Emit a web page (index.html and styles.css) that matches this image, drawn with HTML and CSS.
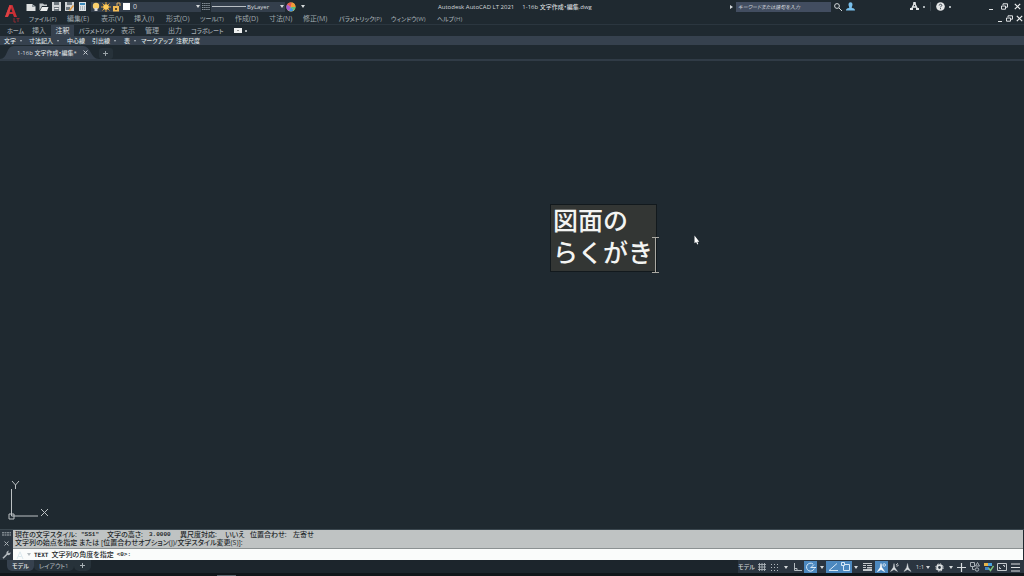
FILE: index.html
```html
<!DOCTYPE html>
<html lang="ja">
<head>
<meta charset="utf-8">
<title>Autodesk AutoCAD LT 2021</title>
<link rel="stylesheet" href="styles.css">
</head>
<body>
<div class="app">
  <header class="header">
    <button class="logo" aria-label="アプリケーション メニュー">
      <svg width="18" height="20" viewBox="0 0 18 20"><path d="M1 14 5.500 2h3l4.500 12h-3l-1.200-3H5.500L4 14z" fill="#c92f35"/><path d="m7 5 1.400 4H5.600z" fill="#1f2930"/><path d="m5.500 2 2 1-3.700 11H1z" fill="#dd4144"/><path d="M10 15v4h2M12.500 15.500h3M14 15.500V19" stroke="#8f2a30" fill="none"/></svg>
    </button>
    <div class="titlebar">
      <div class="quick">
        <button class="ic w13" aria-label="新規"><svg width="10" height="8" viewBox="0 0 10 8"><path d="M.5 1H6l3.500 2.500V8h-9z" fill="#dfe2e2"/><path d="M6 1v3h3.500" fill="#8d969b"/></svg></button>
        <button class="ic w13" aria-label="開く"><svg width="10" height="8" viewBox="0 0 10 8"><path d="M.5 7.500V.5H4l1 1h3V3H3z" fill="#c3c8ca"/><path d="M3 4h6.500L8 8H1z" fill="#eceeee"/></svg></button>
        <button class="ic w13" aria-label="上書き保存"><svg width="9" height="9" viewBox="0 0 9 9"><path d="M0 0h9v9H0z" fill="#cfd3d5"/><path d="M2 0h5v3H2zM2 5h5v4H2z" fill="#6d777e"/><path d="M2.500 6h4v1h-4z" fill="#eee"/></svg></button>
        <button class="ic w13" aria-label="名前を付けて保存"><svg width="9" height="9" viewBox="0 0 9 9"><path d="M0 0h9v9H0z" fill="#cfd3d5"/><path d="M2 0h5v3H2zM1 5h4v3H1z" fill="#6d777e"/><path d="m4 8 4-5 1 1-4 5z" fill="#e79a38"/></svg></button>
        <button class="ic w13" aria-label="印刷"><svg width="7" height="9" viewBox="0 0 7 9"><path d="M0 0h7v9H0z" fill="#dce2e5"/><path d="M1 1h5v2H1z" fill="#3a88b8"/><path d="M1 5h5M1 7h5" stroke="#7b8790" stroke-dasharray="1 1"/></svg></button>
        <div class="field layer">
          <svg width="8" height="10" viewBox="0 0 8 10"><circle cx="4" cy="4" r="3.200" fill="#f8cf6c"/><path d="M2.500 6h3v3h-3z" fill="#d9dadb"/></svg>
          <svg width="10" height="10" viewBox="0 0 10 10"><path d="M5 0v10M0 5h10M1.500 1.500l7 7M8.500 1.500l-7 7" stroke="#e5a43b"/><circle cx="5" cy="5" r="2.800" fill="#ffcb58"/></svg>
          <svg width="9" height="10" viewBox="0 0 9 10"><path d="M1 4h6v5.500H1z" fill="#f1bb54"/><path d="M5 4V1h3v3" fill="none" stroke="#dfb266"/><path d="M3 6h2v2H3z" fill="#5b4a2a"/></svg>
          <svg width="8" height="7" viewBox="0 0 8 7"><path d="M1 0h7v7H1z" fill="#fff"/></svg>
          <span class="grow">0</span><i class="arr"></i>
        </div>
        <svg class="match" width="8" height="7" viewBox="0 0 8 7"><path d="M0 .5h8M0 2.500h8M0 4.500h8M0 6.500h8" stroke="#87919a" stroke-dasharray="1.500 .6"/></svg>
        <div class="field ltype"><span class="line"></span><span class="grow">ByLayer</span><i class="arr"></i></div>
        <button class="ic wheel" aria-label="色"><svg width="10" height="10" viewBox="0 0 10 10"><circle cx="5" cy="5" r="4.500" fill="#e8d14a"/><path d="M5 5 1 2.500A4.500 4.500 0 0 1 6 .6z" fill="#e9574e"/><path d="M5 5 1 2.500A4.500 4.500 0 0 0 3 9z" fill="#a35bd0"/><path d="M5 5 3 9a4.500 4.500 0 0 0 5-1z" fill="#3d92e0"/><path d="m5 5 3 3a4.500 4.500 0 0 0 1.400-3z" fill="#53c27d"/><path d="M5 5 6 .6A4.500 4.500 0 0 1 9.400 5z" fill="#f19a37"/></svg></button>
        <button class="ic w11" aria-label="カスタマイズ"><i class="arr"></i></button>
      </div>
      <div class="title">Autodesk AutoCAD LT 2021<span>1-16b 文字作成・編集.dwg</span></div>
      <div class="right">
        <i class="play"></i>
        <input class="search" type="text" aria-label="検索" placeholder="キーワードまたは語句を入力">
        <button class="ic w13" aria-label="検索実行"><svg width="8" height="8" viewBox="0 0 8 8"><circle cx="3" cy="3" r="2.400" fill="none" stroke="#d5d9db"/><path d="m5 5 3 3" stroke="#d5d9db"/></svg></button>
        <button class="ic w13" aria-label="サインイン"><svg width="9" height="9" viewBox="0 0 9 9"><path d="M2.500 2.200a2 2 0 0 1 4 0c0 2-.8 2.500-.8 3.300C6 6.300 9 6 9 8.500H0C0 6 3 6.300 3.300 5.500c0-.8-.8-1.300-.8-3.300z" fill="#79c0ec"/></svg></button>
        <button class="ic store" aria-label="アプリ ストア"><svg width="9" height="9" viewBox="0 0 9 9"><path d="m4.500 1-3 6M4.500 1l3 6M3 5h3" stroke="#e4e7e8" stroke-width="1.300" fill="none"/><path d="M0 6h3v2H0zM6 6h3v2H6zM3.300 0h2.400v2.500H3.300z" fill="#e4e7e8"/></svg><i class="dot"></i></button>
        <button class="ic help" aria-label="ヘルプ"><svg width="9" height="9" viewBox="0 0 9 9"><circle cx="4.500" cy="4.500" r="4.300" fill="#e4e7e8"/><path d="M3.200 3.500c0-1.800 2.800-1.600 2.600 0C5.700 4.300 4.500 4.300 4.500 5.300M4.500 6.200v1" stroke="#36414b" fill="none"/></svg><i class="dot"></i></button>
        <button class="ic w13" aria-label="最小化"><svg width="7" height="7" viewBox="0 0 7 7"><path d="M1 6.500h4" stroke="#e0e3e4"/></svg></button>
        <button class="ic w13" aria-label="元に戻す"><svg width="7" height="7" viewBox="0 0 7 7"><path d="M2 2V.8h4.500v3.400H5M.5 3h4v3.200h-4z" stroke="#e0e3e4" fill="none"/></svg></button>
        <button class="ic w13" aria-label="閉じる"><svg width="7" height="7" viewBox="0 0 7 7"><path d="m.8.8 5.400 5.400M6.200.8.800 6.200" stroke="#f0f2f2" stroke-width="1.200"/></svg></button>
      </div>
    </div>
    <nav class="menubar">
      <button class="kana">ファイル(F)</button><button>編集(E)</button><button>表示(V)</button><button>挿入(I)</button><button>形式(O)</button><button class="kana">ツール(T)</button><button>作成(D)</button><button>寸法(N)</button><button>修正(M)</button><button class="kana">パラメトリック(P)</button><button class="kana">ウィンドウ(W)</button><button class="kana">ヘルプ(H)</button>
      <div class="docwin">
        <button class="ic" aria-label="図面を最小化"><svg width="6" height="7" viewBox="0 0 6 7"><path d="M1 6.500h4" stroke="#e0e3e4"/></svg></button>
        <button class="ic" aria-label="図面を元に戻す"><svg width="7" height="7" viewBox="0 0 7 7"><path d="M2 2V.8h4.500v3.400H5M.5 3h4v3.200h-4z" stroke="#e0e3e4" fill="none"/></svg></button>
        <button class="ic" aria-label="図面を閉じる"><svg width="7" height="7" viewBox="0 0 7 7"><path d="m.8.8 5.400 5.400M6.200.8.800 6.200" stroke="#f0f2f2" stroke-width="1.200"/></svg></button>
      </div>
    </nav>
  </header>
  <nav class="ribbon">
    <button class="kana">ホーム</button><button>挿入</button><button class="on">注釈</button><button class="kana">パラメトリック</button><button>表示</button><button>管理</button><button>出力</button><button class="kana">コラボレート</button>
    <button class="ic mini" aria-label="リボンを最小化"><svg width="8" height="5" viewBox="0 0 8 5"><path d="M0 0h8v5H0z" fill="#eef0f0"/><path d="m3 3 1-1 1 1z" fill="#333"/></svg><i class="dot"></i></button>
  </nav>
  <div class="panels">
    <button>文字<i></i></button><button>寸法記入<i></i></button><button>中心線</button><button>引出線<i></i></button><button>表<i></i></button><button>マークアップ</button><button>注釈尺度</button>
  </div>
  <div class="files">
    <div class="filetab"><svg class="shape" viewBox="0 0 100 13" preserveAspectRatio="none"><path d="M0 13C8 13 6 0 14 0h70c8 0 8 13 16 13z" fill="#36414e"/></svg><span>1-16b 文字作成・編集*</span><button class="ic" aria-label="タブを閉じる"><svg width="5" height="5" viewBox="0 0 5 5"><path d="m.5.5 4 4M4.500.5l-4 4" stroke="#c5cbd0"/></svg></button></div>
    <button class="add" aria-label="新しい図面"><svg width="7" height="7" viewBox="0 0 7 7"><path d="M3.500 1v5M1 3.500h5" stroke="#9aa3a8"/></svg></button>
  </div>
  <main class="canvas">
    <div class="note">図面の<br>らくがき<svg class="ibeam" width="7" height="36" viewBox="0 0 7 36"><path d="M0 .5h7M0 35.500h7M3.500 0v36" stroke="#aaa9a3"/></svg></div>
    <svg class="pointer" width="6" height="10" viewBox="0 0 6 10"><path d="M.5.5v7.700l1.600-1.300L3.300 9.500l1-.5-1-2.300h2z" fill="#fff"/></svg>
    <svg class="ucs" width="42" height="42" viewBox="0 0 42 42"><path d="M3.500 9v27H30M1 34h5v5H1zM4 1l3.500 4L11 1M7.500 5v4M33 29l7 7M40 29l-7 7" stroke="#bcc1c3" fill="none"/></svg>
  </main>
  <footer class="footer">
    <div class="command">
      <div class="grip">
        <svg width="9" height="4" viewBox="0 0 9 4"><path d="M0 .8h9M0 3h9" stroke="#a6adb3" stroke-dasharray="2 .5"/></svg>
        <svg width="5" height="5" viewBox="0 0 5 5"><path d="m.5.5 4 4M4.500.5l-4 4" stroke="#aab1b6"/></svg>
        <svg width="9" height="9" viewBox="0 0 9 9"><path d="M1 8.200 5.300 4" stroke="#b5bbc0" stroke-width="1.600"/><path d="M5 4.800C3.600 3 5 .6 7 .8L6 2.300l1 1 1.500-1C9 4.500 7 6 5 4.800z" fill="#b5bbc0"/></svg>
      </div>
      <div class="cmdbody">
        <div class="log">
          <p class="cols"><span>現在の文字スタイル:</span><span class="mono">"SS1"</span><span>文字の高さ:</span><span class="mono">3.0000</span><span>異尺度対応:</span><span>いいえ</span><span>位置合わせ:</span><span>左寄せ</span></p>
          <p>文字列の始点を指定 または [位置合わせオプション(J)/文字スタイル変更(S)]:</p>
        </div>
        <div class="prompt"><svg width="8" height="8" viewBox="0 0 8 8"><path d="M1 8 4 .8 7 8M2.200 5.500h3.600" stroke="#dce9ee" fill="none"/></svg><i class="arr"></i><b>TEXT</b><span>文字列の角度を指定</span><span class="mono">&lt;0&gt;:</span></div>
      </div>
    </div>
    <div class="bottom">
      <div class="layouts"><button class="on">モデル</button><button>レイアウト1</button><button aria-label="新しいレイアウト"><svg width="7" height="7" viewBox="0 0 7 7"><path d="M3.500 1v5M1 3.500h5" stroke="#a9b1b6"/></svg></button></div>
      <div class="status">
        <button class="s17">モデル</button>
        <button class="s14" aria-label="グリッド"><svg width="8" height="8" viewBox="0 0 8 8"><path d="M1.500 0v8M4 0v8M6.500 0v8M0 1.500h8M0 4h8M0 6.500h8" stroke="#aab2b8" stroke-width=".9"/></svg></button>
        <button class="s12" aria-label="スナップ"><svg width="8" height="8" viewBox="0 0 8 8"><path d="M0 1.500h8M0 4.500h8M0 7.500h8" stroke="#b4bbc0" stroke-dasharray="1 2"/></svg></button>
        <button class="s9" aria-label="スナップ設定"><i class="arr"></i></button>
        <button class="s14" aria-label="直交モード"><svg width="9" height="9" viewBox="0 0 9 9"><path d="M1.500 0v7.500H9M1 5.500h3v2" stroke="#b4bbc0" fill="none"/></svg></button>
        <button class="s13 act" aria-label="極トラッキング"><svg width="10" height="10" viewBox="0 0 10 10"><path d="M8.300 6.500A4 4 0 1 1 7 2M5 5.500l3-3M4.500 5.500H10" stroke="#d7e8f7" fill="none"/></svg></button>
        <button class="s9" aria-label="極設定"><i class="arr"></i></button>
        <button class="s13 act" aria-label="オブジェクト スナップ トラッキング"><svg width="10" height="9" viewBox="0 0 10 9"><path d="M9 .5 1 7.500h9" stroke="#d7e8f7" fill="none"/></svg></button>
        <button class="s13 act" aria-label="オブジェクト スナップ"><svg width="10" height="10" viewBox="0 0 10 10"><path d="M4 2.500h4.500v6h-6V4M.5.500h3v3h-3z" stroke="#d7e8f7" fill="none"/></svg></button>
        <button class="s8" aria-label="スナップ種類"><i class="arr"></i></button>
        <button class="s15" aria-label="線の太さ"><svg width="9" height="8" viewBox="0 0 9 8"><path d="M0 .5h9M0 2.500h3M4 2.500h5M0 4.500h3" stroke="#c3c8cc"/><path d="M4 4h5v1.500H4zM0 6h9v2H0z" fill="#c3c8cc"/></svg></button>
        <button class="s13 act" aria-label="注釈表示"><svg width="9" height="9" viewBox="0 0 9 9"><path d="m4 .5.8 4L7.500 8.500 4 6.500.5 8.500l2.700-4z" fill="#fff" stroke="#fff" stroke-width=".6"/><circle cx="7.200" cy="2" r="1.300" fill="none" stroke="#fff" stroke-width=".7"/></svg></button>
        <button class="s13" aria-label="自動尺度"><svg width="9" height="9" viewBox="0 0 9 9"><path d="m4 .5.8 4L7.500 8.500 4 6.500.5 8.500l2.700-4z" fill="#d7dbde" stroke="#d7dbde" stroke-width=".4"/><path d="m8 0-2 2h2.500L6.500 4" stroke="#d7dbde" stroke-width=".7" fill="none"/></svg></button>
        <button class="s13" aria-label="注釈尺度"><svg width="9" height="9" viewBox="0 0 9 9"><path d="m4.500.5.8 4L8 8.500l-3.500-2-3.500 2 2.700-4z" fill="#d7dbde" stroke="#d7dbde" stroke-width=".4"/></svg></button>
        <button class="s18">1:1<i class="arr"></i></button>
        <button class="s14" aria-label="ワークスペース"><svg width="9" height="9" viewBox="0 0 9 9"><circle cx="4.500" cy="4.500" r="2.300" fill="none" stroke="#dde0e2" stroke-width="1.800"/><circle cx="4.500" cy="4.500" r="3.700" fill="none" stroke="#dde0e2" stroke-dasharray="1.500 1.400"/></svg></button>
        <button class="s9" aria-label="ワークスペース一覧"><i class="arr"></i></button>
        <button class="s12" aria-label="注釈モニター"><svg width="9" height="9" viewBox="0 0 9 9"><path d="M4.500 0v9M0 4.500h9" stroke="#d7dbde" stroke-width="1.200"/></svg></button>
        <button class="s15" aria-label="選択表示"><svg width="10" height="10" viewBox="0 0 10 10"><path d="M.5.5h4v4h-4zM7.500.5 9.500 4h-4zM2.500 4.500v3h2" stroke="#aab2b8" fill="none"/><circle cx="7" cy="7.500" r="1.700" stroke="#aab2b8" fill="none"/></svg></button>
        <button class="s13" aria-label="グラフィックス"><svg width="10" height="10" viewBox="0 0 10 10"><path d="M0 1h4v3H0z" fill="#e8b549"/><path d="M4 1h4v3H4z" fill="#4aa2df"/><path d="M1 5h4v3H1z" fill="#3f85c8"/><path d="m4.500 6 2 2.500L9.500 4" fill="none" stroke="#7fc27a" stroke-width="1.400"/></svg></button>
        <button class="s14" aria-label="全画面表示"><svg width="10" height="8" viewBox="0 0 10 8"><path d="M.5.5h9v7h-9zM2.500 4v1.500H4M7.500 4V2.500H6" stroke="#c3c8cc" fill="none"/></svg></button>
        <button class="s13" aria-label="カスタマイズ"><svg width="9" height="9" viewBox="0 0 9 9"><path d="M0 1h9M0 4.500h9M0 8h9" stroke="#dde0e2" stroke-width="1.200"/></svg></button>
      </div>
    </div>
    <div class="edge"><i></i></div>
  </footer>
</div>
</body>
</html>
```
FILE: styles.css
```css
* { box-sizing: border-box; }
body {
  margin: 0;
  background: #1f2930;
  color: #b9c0c4;
  font: 7px/10px "Open Sans", "Noto Sans CJK JP", sans-serif;
  font-feature-settings: "palt";
}
button {
  margin: 0; padding: 0; border: 0;
  background: none; color: inherit; font: inherit;
  font-feature-settings: inherit;
  text-align: left; white-space: nowrap;
}
svg { display: block; flex: none; }
p { margin: 0; }
.app { display: flex; flex-direction: column; height: 100vh; overflow: hidden; }
.ic { display: flex; align-items: center; justify-content: center; flex: none; }
.w11 { width: 11px; }
.w13 { width: 13px; }
.kana { font-size: 6px; font-weight: 500; }
.arr { flex: none; width: 0; border: 2px solid transparent; border-top: 3px solid #d5d9db; border-bottom: 0; }
.dot { width: 2px; height: 2px; background: #a9b0b4; }

.header {
  display: grid;
  grid-template-columns: 24px 1fr;
  grid-template-rows: 13px 11px;
  border-bottom: 1px solid #2b363f;
}
.logo { grid-row: 1 / 3; padding: 1px 0 0 4px; }
.titlebar { display: grid; grid-template-columns: 414px 1fr auto; align-items: center; }
.quick { display: flex; align-items: center; height: 12px; }
.field { display: flex; align-items: center; height: 10px; gap: 1px; background: #343f4c; color: #d5d9dc; }
.layer { width: 110px; padding: 0 1px; margin-left: 2px; }
.layer .grow { padding-left: 2px; }
.grow { flex: 1; }
.match { margin: 0 1px; }
.ltype { width: 74px; padding: 0 1px; font-size: 6px; }
.line { width: 34px; height: 1px; background: #b9bfc4; }
.wheel { width: 12px; }
.title { display: flex; gap: 8px; color: #d5d9dc; font-size: 6px; font-weight: 500; white-space: nowrap; }
.right { display: flex; align-items: center; }
.play { width: 0; border: 2px solid transparent; border-left: 3px solid #d5d9db; border-right: 0; margin-right: 3px; }
.search {
  width: 95px; height: 10px; border: 0; padding: 0 2px;
  background: #424d60; color: #d5d9dc;
  font: italic 5px/10px "Open Sans", "Noto Sans CJK JP", sans-serif;
  font-feature-settings: "palt";
}
.search::placeholder { color: #d3d7dc; opacity: 1; }
.store { gap: 4px; padding-right: 5px; margin-left: 53px; border-right: 1px solid #37424a; }
.help { gap: 4px; margin: 0 34px 0 5px; }

.menubar {
  display: grid; align-items: center; padding-left: 5px; color: #9fa8ad;
  grid-template-columns: 38px 34px 33px 32px 34px 35px 34px 34px 36px 52px 46px 1fr auto;
}
.docwin { display: flex; gap: 3px; padding-right: 1px; }

.ribbon {
  display: grid; align-items: stretch; height: 11px; padding-left: 7px; color: #a3abb0;
  grid-template-columns: 25px 19px 28px 42px 24px 23px 23px 43px auto 1fr;
}
.ribbon .on { width: 23px; background: #36414e; color: #e3e6e8; text-align: center; }
.mini { gap: 3px; }

.panels {
  display: grid; height: 9px; padding-left: 4px; align-items: center;
  background: #36414e; color: #dde1e3; font-size: 6px; font-weight: 500;
  grid-template-columns: 25px 38px 25px 32px 17px 35px 1fr;
}
.panels button { display: flex; align-items: center; gap: 4px; }
.panels i { width: 0; border: 1px solid transparent; border-top: 2px solid #b4bbc1; border-bottom: 0; }

.files { display: flex; align-items: flex-end; height: 16px; border-bottom: 2px solid #303b46; }
.filetab { position: relative; display: flex; align-items: center; gap: 6px; height: 13px; padding: 0 11px 0 17px; color: #d8dcde; font-size: 6px; font-weight: 500; white-space: nowrap; }
.filetab .shape { position: absolute; inset: 0; width: 100%; height: 100%; }
.filetab span, .filetab button { position: relative; }
.add { display: flex; align-items: center; justify-content: center; width: 14px; height: 11px; border-radius: 3px; background: #27323a; }

.canvas { position: relative; flex: 1; min-height: 0; }
.note {
  position: absolute; left: 550px; top: 143px; padding: 0 3px 2px 2px;
  border: 1px solid #12191d; background: #333634; color: #f3f4f2;
  font: 500 25px/32px "Liberation Sans", "Noto Sans CJK JP", sans-serif; font-feature-settings: normal;
  white-space: nowrap;
}
.ibeam { position: absolute; right: -3px; bottom: -2px; }
.pointer { position: absolute; left: 694px; top: 174px; }
.ucs { position: absolute; left: 8px; bottom: 7px; }

.command { display: flex; border-top: 1px solid #3a464e; padding-right: 1px; }
.grip { display: flex; flex-direction: column; align-items: center; justify-content: space-between; width: 13px; padding: 2px 0 1px; background: #2c3640; }
.cmdbody { flex: 1; color: #25292b; font: 500 7px/8px "Open Sans", "Noto Sans CJK JP", sans-serif; font-feature-settings: "palt"; }
.log { padding: 1px 2px; background: #bfc3c3; border-bottom: 1px solid #8b9192; }
.cols { display: grid; grid-template-columns: 66px 26px 42px 31px 45px 25px 43px auto; white-space: nowrap; }
.prompt { display: flex; align-items: center; gap: 3px; height: 11px; padding-left: 3px; background: #fafcfb; }
.prompt .arr { border-top-color: #b5bdc1; }
.prompt b { font: bold 6px/8px "DejaVu Sans Mono", monospace; }
.mono { font: bold 6px/8px "Liberation Mono", monospace; }

.bottom { display: flex; justify-content: space-between; align-items: flex-start; height: 13px; background: #1c252c; }
.layouts { display: flex; padding-left: 7px; color: #a3abb0; font-size: 6px; font-weight: 500; }
.layouts button { height: 11px; padding: 0 5px; border-radius: 0 0 5px 5px; background: #27323a; }
.layouts .on { background: #36414e; color: #f0f2f3; }
.status { display: flex; padding: 1px 2px 0 0; height: 13px; background: #2b3540; color: #d2d6d9; }
.status button { display: flex; align-items: center; justify-content: center; gap: 2px; height: 12px; font-size: 6px; font-weight: 500; }
.status .act { background: #4c88bf; }
.s8 { width: 8px; } .s9 { width: 9px; } .s12 { width: 12px; } .s13 { width: 13px; }
.s14 { width: 14px; } .s15 { width: 15px; } .s17 { width: 17px; } .s18 { width: 18px; }
.edge { display: flex; align-items: flex-end; height: 3px; padding-left: 217px; background: #10161a; }
.edge i { width: 19px; height: 1px; background: #59636b; }
```
